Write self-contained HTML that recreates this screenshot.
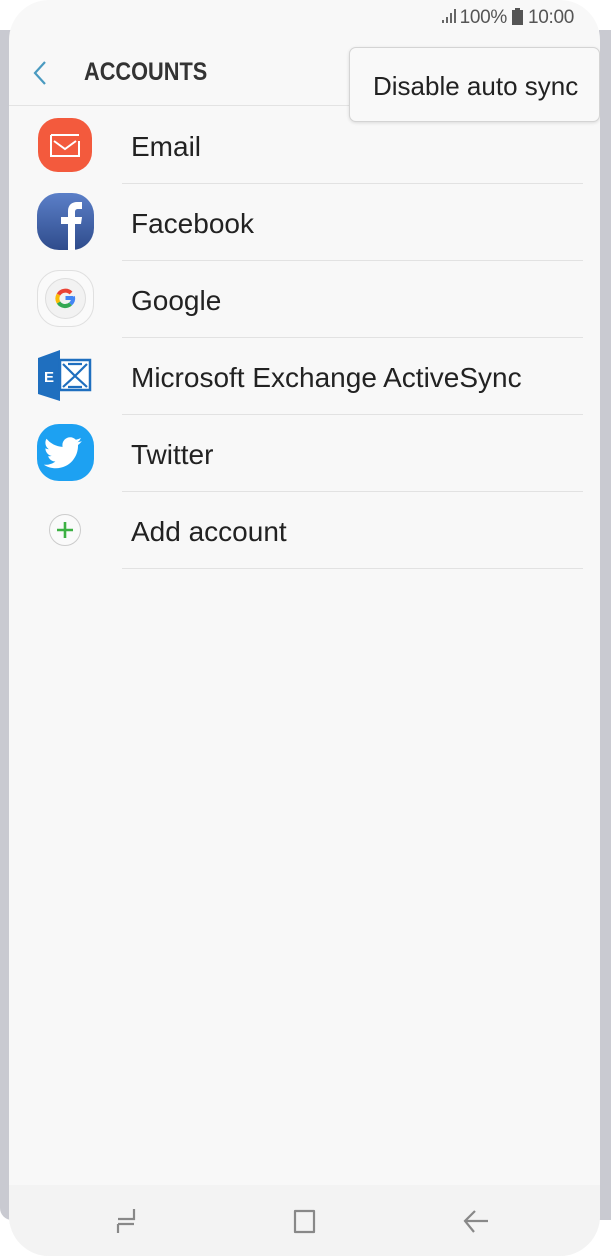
<!DOCTYPE html>
<html><head><meta charset="utf-8">
<style>
*{margin:0;padding:0;box-sizing:border-box}
html,body{width:611px;height:1256px;background:#fff;overflow:hidden;font-family:"Liberation Sans",sans-serif}
.edgeL{position:absolute;left:0;top:30px;width:12px;height:1190px;background:#c9cad1;border-radius:0 0 0 40px}
.edgeR{position:absolute;right:0;top:30px;width:12px;height:1190px;background:#c9cad1}
.screen{position:absolute;left:9px;top:0;width:591px;height:1256px;background:#f8f8f8;border-radius:40px;overflow:hidden}
.nav{position:absolute;left:0;bottom:0;width:100%;height:71px;background:#f3f3f3}
.status{position:absolute;right:26px;top:7px;font-size:19px;color:#555;letter-spacing:-0.3px}
.title{position:absolute;left:75px;top:58px;font-size:25px;font-weight:bold;color:#333;transform:scaleX(0.87);transform-origin:left}
.hdrline{position:absolute;left:0;top:105px;width:100%;height:1px;background:#e3e3e3}
.row{position:absolute;left:122px;font-size:28px;line-height:32px;color:#222}
.div{position:absolute;left:113px;width:461px;height:1px;background:#e2e2e2}
.menu{position:absolute;left:340px;top:47px;width:251px;height:75px;background:#f9f9f9;border:1px solid #d4d4d4;border-radius:7px;box-shadow:0 1px 3px rgba(0,0,0,.12);font-size:26px;color:#222;padding:23px 0 0 23px}
.ic{position:absolute}
</style></head><body>
<div class="edgeL"></div><div class="edgeR"></div>
<div class="screen">
 <div class="status"><svg width="20" height="16" style="vertical-align:-1px"><rect x="2" y="12" width="2" height="3" fill="#666"/><rect x="6" y="9" width="2" height="6" fill="#666"/><rect x="10" y="5" width="2" height="10" fill="#666"/><rect x="14" y="1" width="2" height="14" fill="#666"/></svg>100% <svg width="11" height="17" style="vertical-align:-2px"><rect x="3" y="0" width="5" height="2" fill="#555"/><rect x="0" y="2" width="11" height="15" fill="#555"/></svg> 10:00</div>
 <svg class="ic" style="left:23px;top:60px" width="16" height="26"><path d="M13 2 L3 13 L13 24" stroke="#4a9ac0" stroke-width="2.2" fill="none"/></svg>
 <div class="title">ACCOUNTS</div>
 <div class="hdrline"></div>

 <svg class="ic" style="left:29px;top:118px" width="54" height="54"><rect width="54" height="54" rx="20" fill="#f35a3d"/><path d="M13 17 H41 M13 17 V38 H41 V23 M16 23 L27 31 L38 23" stroke="#fff" stroke-width="2" fill="none"/></svg>
 <div class="row" style="top:131px">Email</div><div class="div" style="top:183px"></div>

 <svg class="ic" style="left:28px;top:193px" width="57" height="57"><defs><linearGradient id="fb" x1="0" y1="0" x2="0" y2="1"><stop offset="0" stop-color="#5b7fc8"/><stop offset="1" stop-color="#2f4c8c"/></linearGradient></defs><rect width="57" height="57" rx="22" fill="url(#fb)"/><path d="M31 57 V31 H24 V24 H31 V18 C31 12 35 9 40 9 H45 V16 H41 C39 16 38 17 38 19 V24 H45 L44 31 H38 V57Z" fill="#fff"/></svg>
 <div class="row" style="top:208px">Facebook</div><div class="div" style="top:260px"></div>

 <svg class="ic" style="left:28px;top:270px" width="57" height="57"><rect x="0.5" y="0.5" width="56" height="56" rx="22" fill="#fafafa" stroke="#e0e0e0"/><circle cx="28.5" cy="28.5" r="20" fill="#f2f2f2" stroke="#ddd"/>
 <path d="M36 28 H28.5" stroke="#4285f4" stroke-width="4"/><path d="M36 26.5 A8 8 0 0 1 33.5 34" stroke="#4285f4" stroke-width="4" fill="none"/><path d="M33.5 34 A8 8 0 0 1 21.5 32.5" stroke="#34a853" stroke-width="4" fill="none"/><path d="M21.5 32.5 A8 8 0 0 1 21.5 24.5" stroke="#fbbc05" stroke-width="4" fill="none"/><path d="M21.5 24.5 A8 8 0 0 1 34 23" stroke="#ea4335" stroke-width="4" fill="none"/></svg>
 <div class="row" style="top:285px">Google</div><div class="div" style="top:337px"></div>

 <svg class="ic" style="left:29px;top:350px" width="54" height="52"><path d="M0 8 L22 0 V51 L0 44Z" fill="#1f6fbf"/><rect x="22" y="10" width="30" height="30" fill="#fff" stroke="#1f6fbf" stroke-width="2.5"/><path d="M25 14 L37 26 L25 37 M49 14 L37 26 L49 37 M30 14 H44 M30 37 H44" stroke="#1f6fbf" stroke-width="2.2" fill="none"/><text x="6" y="32" font-family="Liberation Sans" font-weight="bold" font-size="15" fill="#fff">E</text></svg>
 <div class="row" style="top:362px">Microsoft Exchange ActiveSync</div><div class="div" style="top:414px"></div>

 <svg class="ic" style="left:28px;top:424px" width="57" height="57"><rect width="57" height="57" rx="22" fill="#1da1f2"/><path d="M45 17 c-1.5 .7 -3 1 -4.5 1.2 c1.6 -1 2.8 -2.5 3.4 -4.3 c-1.5 .9 -3.2 1.5 -5 1.9 c-1.4 -1.5 -3.5 -2.5 -5.7 -2.5 c-4.3 0 -7.8 3.5 -7.8 7.8 c0 .6 .1 1.2 .2 1.8 c-6.5 -.3 -12.2 -3.4 -16.1 -8.1 c-.7 1.2 -1.1 2.5 -1.1 3.9 c0 2.7 1.4 5.1 3.5 6.5 c-1.3 0 -2.5 -.4 -3.5 -1 c0 3.8 2.7 7 6.3 7.700 c-.7 .2 -1.4 .3 -2.1 .3 c-.5 0 -1 0 -1.5 -.1 c1 3.1 3.9 5.4 7.3 5.4 c-2.7 2.1 -6 3.3 -9.7 3.3 c-.6 0 -1.3 0 -1.9 -.1 c3.5 2.2 7.6 3.5 12 3.5 c14.4 0 22.2 -11.9 22.2 -22.2 v-1 c1.5 -1.1 2.8 -2.5 3.9 -4z" fill="#fff"/></svg>
 <div class="row" style="top:439px">Twitter</div><div class="div" style="top:491px"></div>

 <svg class="ic" style="left:39px;top:513px" width="34" height="34"><circle cx="17" cy="17" r="15.5" fill="#fafafa" stroke="#ccc"/><path d="M17 9 V25 M9 17 H25" stroke="#3cb043" stroke-width="2.6"/></svg>
 <div class="row" style="top:516px">Add account</div><div class="div" style="top:568px"></div>

 <div class="menu">Disable auto sync</div>

 <div class="nav">
  <svg class="ic" style="left:105px;top:20px" width="30" height="32"><path d="M20 4 V14 H4 M4 19 H20 M4 19 V28" stroke="#888" stroke-width="2.2" fill="none"/></svg>
  <svg class="ic" style="left:281px;top:20px" width="30" height="32"><path d="M5 6 H24 V27 H5Z" stroke="#888" stroke-width="2.2" fill="none" stroke-linejoin="round"/></svg>
  <svg class="ic" style="left:452px;top:20px" width="30" height="32"><path d="M4 16 H27 M14 6 L4 16 L13 27" stroke="#888" stroke-width="2.2" fill="none"/></svg>
 </div>
</div>
</body></html>
